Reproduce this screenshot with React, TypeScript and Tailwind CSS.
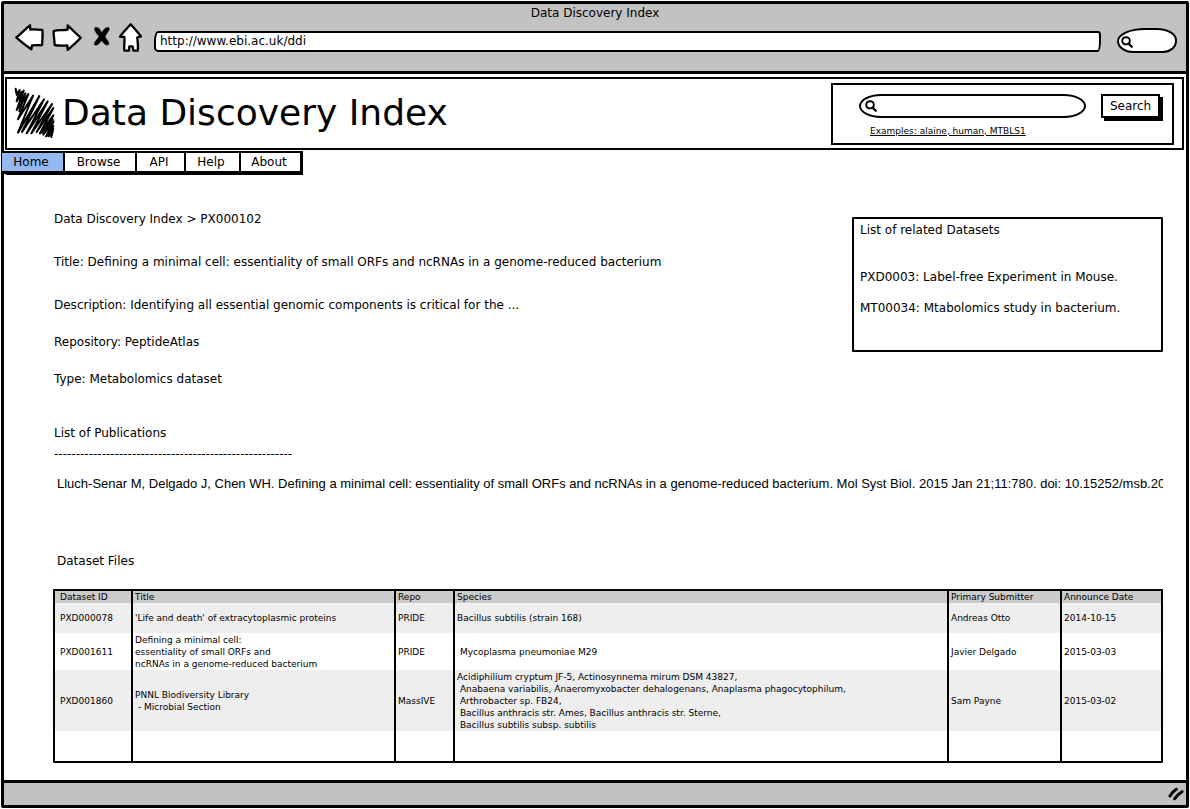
import type { ReactNode } from "react";

type Row = {
  id: string;
  title: string;
  repo: string;
  species: string;
  submitter: string;
  date: string;
  height: string;
};

const rows: Row[] = [
  {
    id: "PXD000078",
    title: "'Life and death' of extracytoplasmic proteins",
    repo: "PRIDE",
    species: "Bacillus subtilis (strain 168)",
    submitter: "Andreas Otto",
    date: "2014-10-15",
    height: "h-[30px] bg-[#eeeeee]",
  },
  {
    id: "PXD001611",
    title: "Defining a minimal cell:\nessentiality of small ORFs and\nncRNAs in a genome-reduced bacterium",
    repo: "PRIDE",
    species: " Mycoplasma pneumoniae M29",
    submitter: "Javier Delgado",
    date: "2015-03-03",
    height: "h-[37px]",
  },
  {
    id: "PXD001860",
    title: "PNNL Biodiversity Library\n - Microbial Section",
    repo: "MassIVE",
    species:
      "Acidiphilium cryptum JF-5, Actinosynnema mirum DSM 43827,\n Anabaena variabilis, Anaeromyxobacter dehalogenans, Anaplasma phagocytophilum,\n Arthrobacter sp. FB24,\n Bacillus anthracis str. Ames, Bacillus anthracis str. Sterne,\n Bacillus subtilis subsp. subtilis",
    submitter: "Sam Payne",
    date: "2015-03-02",
    height: "h-[61px] bg-[#eeeeee]",
  },
  { id: "", title: "", repo: "", species: "", submitter: "", date: "", height: "h-[30px]" },
];

const tabs = [
  { label: "Home", box: "w-[61px] bg-[#94b9f1]" },
  { label: "Browse", box: "w-[72px] border-l-2 bg-white" },
  { label: "API", box: "w-[49px] border-l-2 bg-white" },
  { label: "Help", box: "w-[55px] border-l-2 bg-white" },
  { label: "About", box: "w-[61px] border-l-2 bg-white" },
];

function IconButton({ label, children }: { label: string; children: ReactNode }) {
  return (
    <button type="button" aria-label={label} className="block">
      {children}
    </button>
  );
}

function Magnifier({ className }: { className: string }) {
  return (
    <svg viewBox="0 0 12 12" className={className} fill="none" stroke="black" strokeWidth="1.9" strokeLinecap="round">
      <path d="M5 1.2C7.3 1 8.8 2.6 8.8 4.7C8.8 6.9 7.3 8.4 5.1 8.4C2.8 8.5 1.2 7 1.2 4.9C1.2 2.8 2.7 1.3 5 1.2Z" />
      <path d="M7.6 7.6L10.8 10.8" strokeWidth="2.2" />
    </svg>
  );
}

function Toolbar() {
  return (
    <div className="flex pt-px pr-[9px] pb-[18px] pl-[11px]">
      <div className="mr-3 flex h-7 items-center gap-2 self-start">
        <IconButton label="Back">
          <svg viewBox="46 40 87 81" className="h-[27px] w-[29px]" fill="white" stroke="black" strokeWidth="7" strokeLinejoin="round">
            <path d="M50 80C63 70 78 54 91 44L92 57C104 55 117 57 128 58C130 72 128 88 127 103L97 104L95 116C80 105 64 94 50 80Z" />
          </svg>
        </IconButton>
        <IconButton label="Forward">
          <svg viewBox="156 40 90 81" className="h-[27px] w-[30px]" fill="white" stroke="black" strokeWidth="7" strokeLinejoin="round">
            <path d="M161 61C174 57 188 60 203 57L203 44C216 56 228 69 242 81C230 95 216 106 203 118L202 104C189 105 176 106 164 103C164 89 160 75 161 61Z" />
          </svg>
        </IconButton>
        <IconButton label="Stop">
          <svg viewBox="270 49 63 63" className="size-[21px]" fill="black" stroke="black" strokeWidth="2" strokeLinejoin="round">
            <path d="M285 51C292 46 299 53 305 67C311 56 319 48 326 51C332 55 322 64 315 78C321 89 329 95 326 101C319 107 311 99 305 89C299 99 291 105 284 103C279 97 290 89 297 78C290 67 280 57 285 51Z" />
          </svg>
        </IconButton>
        <IconButton label="Home page">
          <svg viewBox="355 36 69 87" className="h-[29px] w-[23px]" fill="white" stroke="black" strokeWidth="7" strokeLinejoin="round">
            <path d="M390 40C400 51 411 64 421 76L410 79C410 92 414 106 411 119L398 119L396 106L386 106L385 119L371 119C369 105 373 92 371 78L358 77C367 64 379 52 390 40Z" />
          </svg>
        </IconButton>
      </div>
      <input
        type="text"
        aria-label="Address"
        defaultValue="http://www.ebi.ac.uk/ddi"
        className="mt-[8px] h-[21px] min-w-0 flex-1 border-2 border-black bg-white pb-[2px] pl-1 outline-none [border-radius:4px_3px_3px_5px/10px_4px_12px_4px]"
      />
      <div className="relative mt-[5px] ml-4 w-[60px]">
        <input
          type="search"
          aria-label="Web search"
          className="h-[25px] w-full border-2 border-black bg-white pr-2 pl-5 outline-none [border-radius:28px_20px_14px_16px/13px_12px_12px_12px]"
        />
        <Magnifier className="pointer-events-none absolute top-[8px] left-[4px] size-3" />
      </div>
    </div>
  );
}

function Banner() {
  return (
    <header className="mt-[3px] mr-[2px] ml-px flex h-[73px] items-center justify-between border-2 border-black pr-2 pl-[7px]">
      <div className="flex items-center gap-[6px] pb-[2px]">
        <svg viewBox="12 15 126 153" className="h-[51px] w-[42px]" fill="none" stroke="black" strokeWidth="6" strokeLinejoin="round" strokeLinecap="round">
          <path d="M17 20L20 38L29 24L20 58L41 26L20 84L55 36L24 112L69 41L24 152L88 42L36 150L102 52L50 154L113 58L64 154L126 66L80 150L130 78L90 154L130 100L100 158L131 118L108 163L130 132L116 163L129 145L124 165" />
          <path d="M18 26L26 46L34 30L30 60L46 34L28 88M100 148L128 112M96 152L128 124M112 160L130 140" />
        </svg>
        <h1 className="text-4xl">Data Discovery Index</h1>
      </div>
      <form
        className="flex h-[62px] w-[343px] items-start justify-between border-2 border-black pt-[9px] pr-[12px] pl-[26px]"
        onSubmit={(e) => e.preventDefault()}
      >
        <div className="relative w-[227px]">
          <input
            type="search"
            aria-label="Search datasets"
            className="block h-6 w-full border-2 border-black bg-white pr-3 pl-6 outline-none [border-radius:22px/12px]"
          />
          <Magnifier className="pointer-events-none absolute top-[6px] left-[6px] size-3" />
          <a href="#examples" className="mt-[7px] ml-[11px] block text-[9px] leading-3 underline underline-offset-1">
            Examples: alaine, human, MTBLS1
          </a>
        </div>
        <button type="submit" className="h-[24px] w-[59px] border-2 border-black bg-white shadow-[3px_3px_0_0_#000]">
          Search
        </button>
      </form>
    </header>
  );
}

export default function App() {
  return (
    <div className="flex min-h-screen flex-col bg-white p-px font-['DejaVu_Sans',sans-serif] text-xs leading-4 text-black">
      <div className="flex flex-1 flex-col rounded-[2px] border-[3px] border-black">
        <div className="border-b-[3px] border-black bg-[#c2c2c2]">
          <p className="text-center leading-[18px]">Data Discovery Index</p>
          <Toolbar />
        </div>

        <Banner />

        <nav className="mt-px -ml-[2px] flex self-start rounded-bl-[6px] border-t-2 border-r-[3px] border-b-4 border-black">
          {tabs.map((t) => (
            <a
              key={t.label}
              href={`#${t.label.toLowerCase()}`}
              className={`${t.box} flex h-[18px] items-center justify-center border-black pr-[3px]`}
            >
              {t.label}
            </a>
          ))}
        </nav>

        <main className="flex-1 pr-[23px] pb-[17px] pl-[49px]">
          <div className="flex items-start justify-between pt-9">
            <div className="pl-px">
              <p className="mb-[27px]">Data Discovery Index &gt; PX000102</p>
              <p className="mb-[27px]">
                Title: Defining a minimal cell: essentiality of small ORFs and ncRNAs in a genome-reduced bacterium
              </p>
              <p className="mb-[21px]">
                Description: Identifying all essential genomic components is critical for the ...
              </p>
              <p className="mb-[21px]">Repository: PeptideAtlas</p>
              <p>Type: Metabolomics dataset</p>
            </div>
            <aside className="mt-[6px] min-h-[135px] w-[311px] rounded-[1px] border-2 border-black px-[6px] py-[3px]">
              <h2 className="mb-[31px]">List of related Datasets</h2>
              <p className="mb-[15px]">PXD0003: Label-free Experiment in Mouse.</p>
              <p>MT00034: Mtabolomics study in bacterium.</p>
            </aside>
          </div>

          <section className="pt-[38px] pl-px">
            <h2>List of Publications</h2>
            <p className="mt-[5px] mb-[14px]">-------------------------------------------------------</p>
            <p className="overflow-hidden pl-[3px] font-['Liberation_Sans',sans-serif] text-[13px] leading-4 whitespace-nowrap">
              Lluch-Senar M, Delgado J, Chen WH. Defining a minimal cell: essentiality of small ORFs and ncRNAs in a
              genome-reduced bacterium. Mol Syst Biol. 2015 Jan 21;11:780. doi: 10.15252/msb.20
            </p>
          </section>

          <section className="pt-[61px]">
            <h2 id="files" className="mb-5 pl-1">
              Dataset Files
            </h2>
            <table
              aria-labelledby="files"
              className="w-full table-fixed border-separate border-spacing-0 rounded-[1px] border-2 border-black text-left text-[9px] leading-3"
            >
              <colgroup>
                <col className="w-[76px]" />
                <col className="w-[263px]" />
                <col className="w-[59px]" />
                <col />
                <col className="w-[113px]" />
                <col className="w-[101px]" />
              </colgroup>
              <thead>
                <tr className="h-3 bg-[#cbcbcb]">
                  <th className="p-0 pl-[5px] font-normal">Dataset ID</th>
                  <th className="border-l-2 border-black p-0 pl-[2px] font-normal">Title</th>
                  <th className="border-l-2 border-black p-0 pl-[2px] font-normal">Repo</th>
                  <th className="border-l-2 border-black p-0 pl-[2px] font-normal">Species</th>
                  <th className="border-l-2 border-black p-0 pl-[2px] font-normal">Primary Submitter</th>
                  <th className="border-l-2 border-black p-0 pl-[2px] font-normal">Announce Date</th>
                </tr>
              </thead>
              <tbody>
                {rows.map((r, i) => (
                  <tr key={i} className={r.height}>
                    <td className="p-0 pl-[5px]">{r.id}</td>
                    <td className="border-l-2 border-black p-0 pl-[2px] whitespace-pre-wrap">{r.title}</td>
                    <td className="border-l-2 border-black p-0 pl-[2px]">{r.repo}</td>
                    <td className="border-l-2 border-black p-0 pl-[2px] whitespace-pre-wrap">{r.species}</td>
                    <td className="border-l-2 border-black p-0 pl-[2px]">{r.submitter}</td>
                    <td className="border-l-2 border-black p-0 pl-[2px]">{r.date}</td>
                  </tr>
                ))}
              </tbody>
            </table>
          </section>
        </main>

        <footer className="flex h-[25px] items-center justify-end border-t-[3px] border-black bg-[#c2c2c2] pr-[2px]">
          <svg viewBox="0 0 48 42" className="h-[14px] w-4" fill="none" stroke="black" strokeWidth="9" strokeLinecap="round">
            <path d="M6 27C10 19 17 12 25 7M20 35C25 27 33 20 42 14" />
          </svg>
        </footer>
      </div>
    </div>
  );
}
